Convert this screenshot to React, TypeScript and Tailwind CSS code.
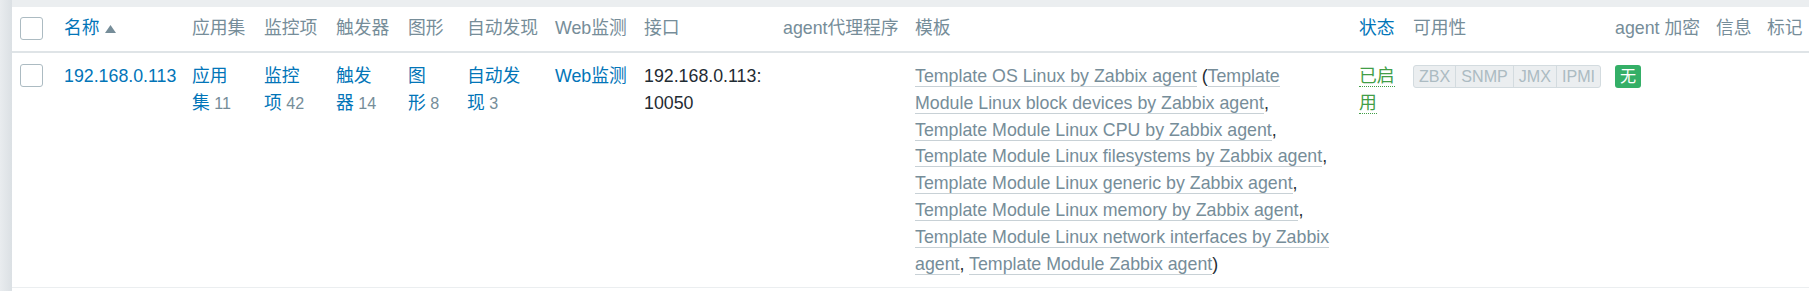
import React from "react";

const COLS =
  "grid grid-cols-[52px_128px_72px_72px_72px_59px_88px_89px_139px_132px_444px_54px_202px_101px_51px_42px]";

function Checkbox({ mt }: { mt: string }) {
  return (
    <div
      className={`ml-[8px] w-[23px] h-[23px] border border-[#acbbc2] rounded-[3px] bg-white ${mt}`}
    />
  );
}

function Count({ n }: { n: string }) {
  return <span className="text-[16.1px] leading-none text-[#768d99]">{"\u00a0" + n}</span>;
}

function Tpl({ children }: { children: React.ReactNode }) {
  return <a className="text-[#768d99] border-b border-[#c8d1d6]">{children}</a>;
}

function H({ children, blue }: { children?: React.ReactNode; blue?: boolean }) {
  return (
    <div
      className={`pt-[7.6px] pb-[9.6px] pr-[12px] whitespace-nowrap ${
        blue ? "text-[#0275b8]" : "text-[#768d99]"
      }`}
    >
      {children}
    </div>
  );
}

function C({ children, pr = "pr-[12px]" }: { children?: React.ReactNode; pr?: string }) {
  return <div className={`pt-[10px] pb-[10px] ${pr}`}>{children}</div>;
}

export default function App() {
  return (
    <div className="w-[1809px] h-[291px] flex bg-[#ebeef0] font-['Liberation_Sans','Noto_Sans_CJK_SC',sans-serif] text-[17.8px] leading-[26.8px] overflow-hidden">
      <div className="w-[12px] shrink-0 bg-gradient-to-r from-[#e9ecef] to-[#dbe0e4]" />
      <div className="flex-1 flex flex-col pt-[7px]">
        <div className="flex-1 bg-white">
          {/* header */}
          <div className={`${COLS} border-b-2 border-[#dfe4e7]`}>
            <div className="pt-[2.4px]">
              <Checkbox mt="mt-[7.6px]" />
            </div>
            <H blue>
              名称
              <svg
                width="11"
                height="8"
                viewBox="0 0 11 8"
                className="inline-block ml-[5px]"
              >
                <polygon points="5.5,0 11,8 0,8" fill="#768d99" />
              </svg>
            </H>
            <H>应用集</H>
            <H>监控项</H>
            <H>触发器</H>
            <H>图形</H>
            <H>自动发现</H>
            <H>Web监测</H>
            <H>接口</H>
            <H>agent代理程序</H>
            <H>模板</H>
            <H blue>状态</H>
            <H>可用性</H>
            <H>agent 加密</H>
            <H>信息</H>
            <H>标记</H>
          </div>
          {/* row */}
          <div className={`${COLS} border-b border-[#ebeef0]`}>
            <div className="pt-[11px]">
              <Checkbox mt="mt-0" />
            </div>
            <C>
              <a className="text-[#0275b8]">192.168.0.113</a>
            </C>
            <C>
              <a className="text-[#0275b8]">应用集</a>
              <Count n="11" />
            </C>
            <C>
              <a className="text-[#0275b8]">监控项</a>
              <Count n="42" />
            </C>
            <C>
              <a className="text-[#0275b8]">触发器</a>
              <Count n="14" />
            </C>
            <C>
              <a className="text-[#0275b8]">图形</a>
              <Count n="8" />
            </C>
            <C>
              <a className="text-[#0275b8]">自动发现</a>
              <Count n="3" />
            </C>
            <C>
              <a className="text-[#0275b8]">Web监测</a>
            </C>
            <C>
              <span className="text-[#1f2c33]">192.168.0.113: 10050</span>
            </C>
            <C />
            <C pr="pr-[20px]">
              <span className="text-[#1f2c33]">
                <Tpl>Template OS Linux by Zabbix agent</Tpl> (
                <Tpl>Template Module Linux block devices by Zabbix agent</Tpl>,{" "}
                <Tpl>Template Module Linux CPU by Zabbix agent</Tpl>,{" "}
                <Tpl>Template Module Linux filesystems by Zabbix agent</Tpl>,{" "}
                <Tpl>Template Module Linux generic by Zabbix agent</Tpl>,{" "}
                <Tpl>Template Module Linux memory by Zabbix agent</Tpl>,{" "}
                <Tpl>Template Module Linux network interfaces by Zabbix agent</Tpl>,{" "}
                <Tpl>Template Module Zabbix agent</Tpl>)
              </span>
            </C>
            <C>
              <span className="text-[#429e47] border-b border-dotted border-[#429e47]">
                已启用
              </span>
            </C>
            <C>
              <div className="mt-[1px] inline-flex border border-[#d3dbdf] rounded-[3px] bg-[#ebeef0] text-[#acbbc2] text-[16.1px] leading-[21px]">
                <span className="px-[5px]">ZBX</span>
                <span className="px-[5px] border-l border-[#d3dbdf]">SNMP</span>
                <span className="px-[5px] border-l border-[#d3dbdf]">JMX</span>
                <span className="px-[5px] border-l border-[#d3dbdf]">IPMI</span>
              </div>
            </C>
            <C>
              <div className="mt-[1px] inline-block rounded-[3px] bg-[#34af67] text-white text-[16.1px] leading-[22.7px] px-[5px]">
                无
              </div>
            </C>
            <C />
            <C />
          </div>
        </div>
      </div>
    </div>
  );
}
